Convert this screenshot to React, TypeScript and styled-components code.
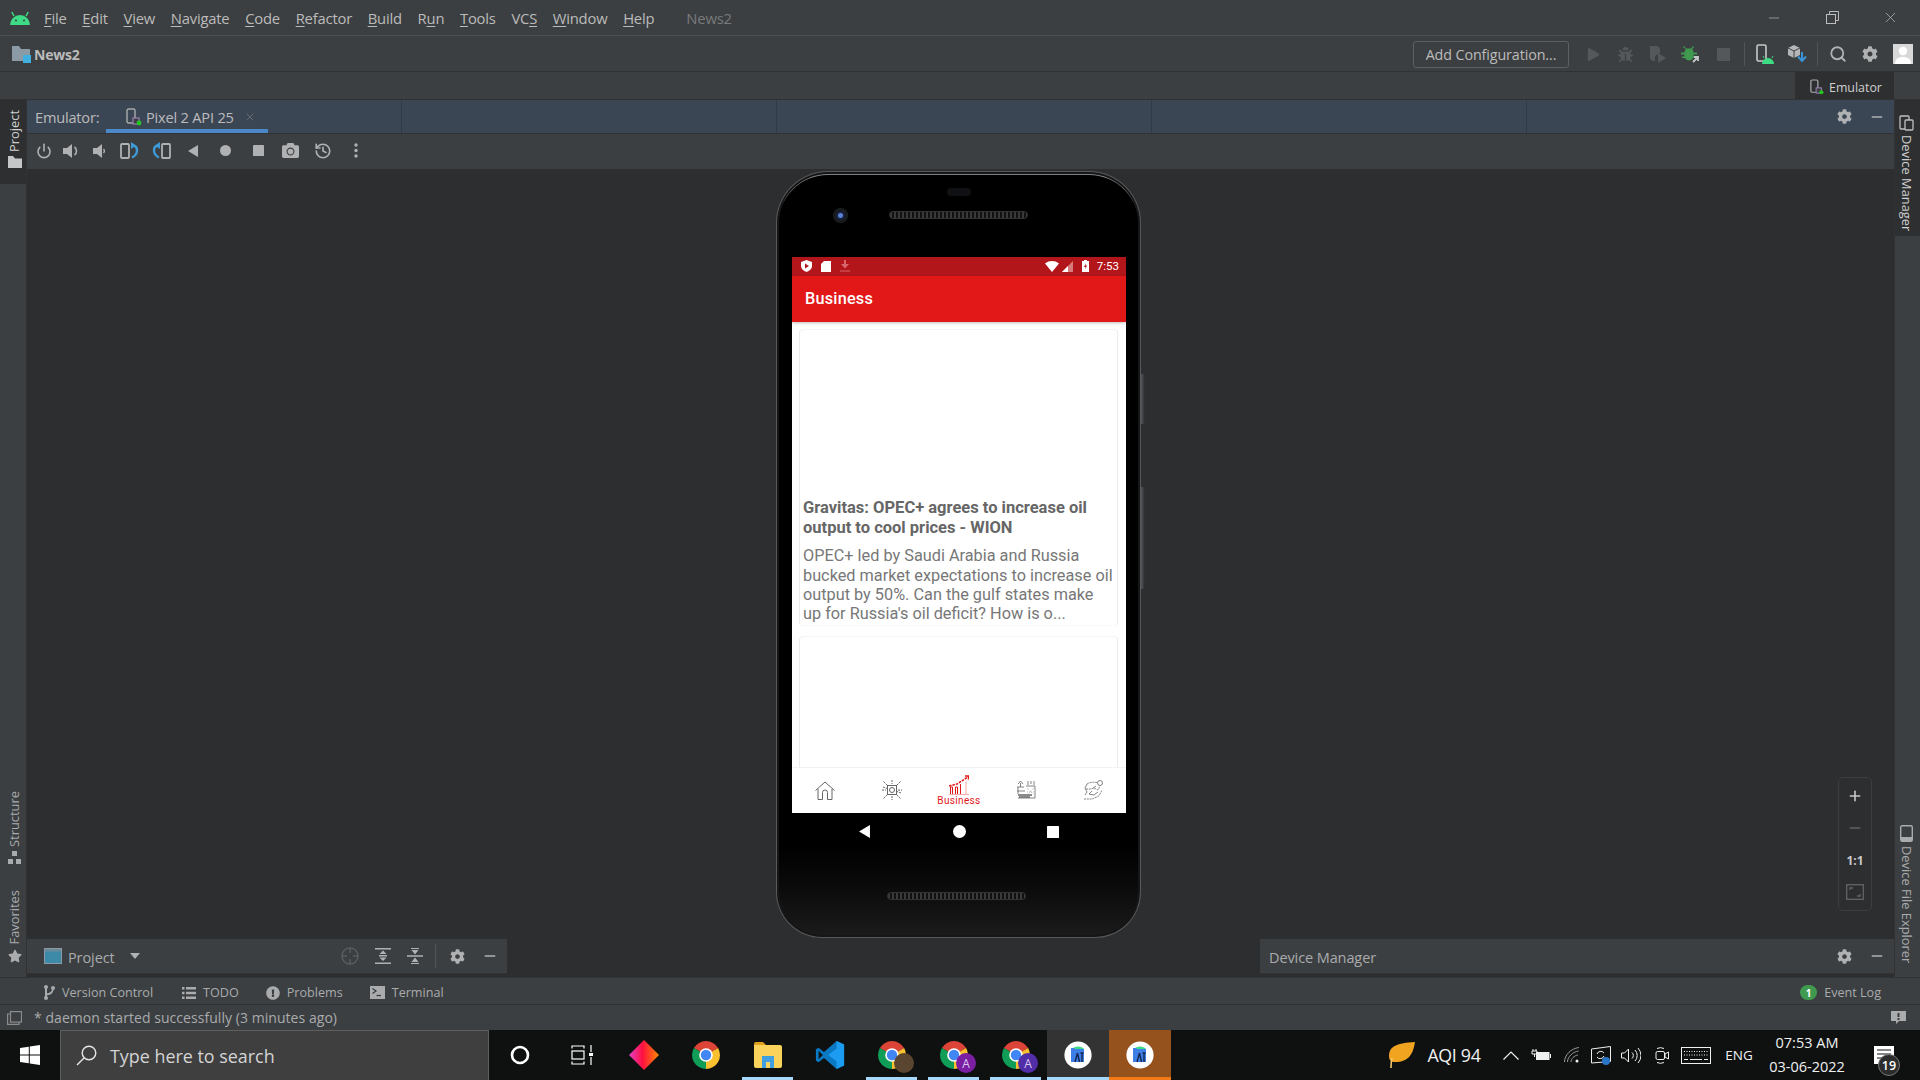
import React from 'react';
import styled, { createGlobalStyle } from 'styled-components';
import { FaBug, FaCamera, FaCog, FaPlay, FaStar, FaExclamationCircle } from 'react-icons/fa';
import { Search, Power, History, X, Minus, Plus } from 'lucide-react';

const UI_FONT = '"Open Sans", "Noto Sans", sans-serif';

const GlobalStyle = createGlobalStyle`
  html, body { margin: 0; padding: 0; background: #3c3f41; }
  * { box-sizing: border-box; }
  body { font-family: ${UI_FONT}; overflow: hidden; }
`;

const Page = styled.div`
  width: 1920px;
  height: 1080px;
  display: flex;
  flex-direction: column;
  background: #3c3f41;
  color: #bbbbbb;
  overflow: hidden;
`;

/* ---------- title + toolbar ---------- */

const TitleBar = styled.div`
  height: 36px;
  flex: none;
  display: flex;
  align-items: center;
  padding-left: 10px;
  border-bottom: 1px solid #4d5052;
`;

const MenuList = styled.div`
  display: flex;
  gap: 15.7px;
  margin-left: 14px;
  font-size: 14.8px;
  letter-spacing: -0.2px;
`;

const MenuItem = styled.span`
  color: #bbbbbb;
  u { text-underline-offset: 2px; }
`;

const ProjectTitle = styled.span`
  margin-left: 32px;
  font-size: 14.8px;
  letter-spacing: -0.2px;
  color: #787a7c;
`;

const WindowControls = styled.div`
  margin-left: auto;
  display: flex;
  color: #bdbdbd;
`;

const WindowButton = styled.div`
  width: 58.5px;
  height: 35px;
  display: flex;
  align-items: center;
  justify-content: center;
`;

const ToolBar = styled.div`
  height: 36px;
  flex: none;
  display: flex;
  align-items: center;
  padding: 1px 7px 0 12px;
  border-bottom: 1px solid #323232;
`;

const ProjectName = styled.span`
  margin-left: 3px;
  font-size: 14px;
  font-weight: 700;
  letter-spacing: -0.2px;
  color: #bbbbbb;
`;

const ToolGroup = styled.div`
  margin-left: auto;
  display: flex;
  align-items: center;
`;

const ConfigButton = styled.div`
  width: 156px;
  height: 27px;
  margin-right: 8px;
  display: flex;
  align-items: center;
  justify-content: center;
  border: 1px solid #5e6060;
  border-radius: 3px;
  font-size: 14.3px;
  letter-spacing: -0.1px;
  color: #bbbbbb;
`;

const ToolIcon = styled.div<{ $w?: number; $color?: string }>`
  width: ${(p) => p.$w ?? 32}px;
  height: 30px;
  flex: none;
  display: flex;
  align-items: center;
  justify-content: center;
  color: ${(p) => p.$color ?? '#afb1b3'};
`;

const ToolSep = styled.div<{ $ml?: number }>`
  width: 1px;
  height: 24px;
  margin-left: ${(p) => p.$ml ?? 0}px;
  background: #515355;
`;

const Avatar = styled.div`
  width: 20px;
  height: 20px;
  margin-left: 11px;
  background: #d8d8d8;
  display: flex;
  align-items: center;
  justify-content: center;
`;

const TabStrip = styled.div`
  height: 28px;
  flex: none;
  display: flex;
  justify-content: flex-end;
  padding-right: 26px;
  border-bottom: 1px solid #323232;
`;

const TabButton = styled.div`
  width: 99px;
  height: 27px;
  display: flex;
  align-items: center;
  padding: 3px 0 0 15px;
  gap: 5px;
  background: #2d2f31;
  font-size: 12.4px;
  color: #d0d0d0;
`;

/* ---------- body ---------- */

const Body = styled.div`
  flex: 1;
  min-height: 0;
  display: flex;
`;

const SideStrip = styled.div<{ $side: 'left' | 'right' }>`
  width: ${(p) => (p.$side === 'left' ? 27 : 26)}px;
  flex: none;
  display: flex;
  flex-direction: column;
  justify-content: space-between;
  ${(p) => (p.$side === 'left' ? 'border-right: 1px solid #323232;' : 'border-left: 1px solid #323232;')}
`;

const SideGroup = styled.div`
  display: flex;
  flex-direction: column;
  align-items: center;
`;

const SideTab = styled.div<{ $active?: boolean; $pad?: string }>`
  width: 100%;
  display: flex;
  flex-direction: column;
  align-items: center;
  gap: 4px;
  padding: ${(p) => p.$pad ?? '8px 0'};
  background: ${(p) => (p.$active ? '#2d2f31' : 'transparent')};
  color: ${(p) => (p.$active ? '#d0d0d0' : '#a9abad')};
`;

const SideLabel = styled.span<{ $side: 'left' | 'right' }>`
  writing-mode: vertical-rl;
  font-size: 12.9px;
  line-height: 15px;
  ${(p) => (p.$side === 'left' ? 'transform: rotate(180deg);' : '')}
`;

const Center = styled.div`
  flex: 1;
  min-width: 0;
  display: flex;
  flex-direction: column;
`;

const EmuHeader = styled.div`
  height: 34px;
  flex: none;
  display: flex;
  align-items: stretch;
  background: #3b4655;
  border-bottom: 1px solid #323232;
`;

const EmuLabel = styled.div`
  width: 79px;
  padding-left: 8px;
  display: flex;
  align-items: center;
  font-size: 14.6px;
  letter-spacing: -0.2px;
  color: #bbbbbb;
`;

const EmuTab = styled.div`
  width: 162px;
  display: flex;
  align-items: center;
  gap: 4px;
  padding: 4px 0 0 20px;
  font-size: 14.6px;
  letter-spacing: -0.2px;
  color: #bbbbbb;
  border-bottom: 4px solid #4a88c7;
`;

const HeaderCells = styled.div`
  flex: 1;
  display: flex;
`;

const HeaderCell = styled.div<{ $w?: number }>`
  width: ${(p) => p.$w ?? 375}px;
  flex: none;
  border-right: 1px solid #323a45;
`;

const HeaderTools = styled.div`
  margin-left: auto;
  display: flex;
  align-items: center;
`;

const EmuTools = styled.div`
  height: 35px;
  flex: none;
  display: flex;
  align-items: center;
  padding: 0 0 2px 4px;
  background: #3c3f41;
`;

const Canvas = styled.div`
  flex: 1;
  min-height: 0;
  position: relative;
  display: flex;
  align-items: center;
  justify-content: center;
  padding-right: 4px;
  background: #2c2e30;
`;

const ZoomPanel = styled.div`
  position: absolute;
  right: 22px;
  bottom: 28px;
  width: 34px;
  height: 134px;
  display: flex;
  flex-direction: column;
  justify-content: space-around;
  align-items: center;
  border: 1px solid #3c3f41;
  border-radius: 5px;
  padding: 2px 0;
  color: #c8c8c8;
`;

const ZoomItem = styled.div<{ $dim?: boolean }>`
  height: 30px;
  display: flex;
  align-items: center;
  justify-content: center;
  font-size: 12px;
  font-weight: 700;
  color: ${(p) => (p.$dim ? '#606264' : '#c8c8c8')};
`;

/* ---------- phone ---------- */

const Phone = styled.div`
  width: 365px;
  height: 767px;
  position: relative;
  display: flex;
  flex-direction: column;
  align-items: center;
  border-radius: 52px 52px 46px 46px;
  background: linear-gradient(#000 88%, #0a0a0a 93%, #1c1c1c);
  box-shadow: inset 0 0 0 1px #57595b, inset 0 0 0 3px #161616, inset 0 2px 0 2px #7d7f81;
`;

const SideKey = styled.div<{ $top: number; $h: number }>`
  position: absolute;
  right: -4px;
  top: ${(p) => p.$top}px;
  width: 4px;
  height: ${(p) => p.$h}px;
  background: linear-gradient(90deg, #55575a, #2a2b2d);
  border-radius: 0 2px 2px 0;
`;

const TopBezel = styled.div`
  height: 86px;
  width: 100%;
  flex: none;
  display: flex;
  flex-direction: column;
  align-items: center;
  padding-top: 17px;
  gap: 15px;
  position: relative;
`;

const Earpiece = styled.div`
  width: 24px;
  height: 8px;
  border-radius: 4px;
  background: #101114;
`;

const Speaker = styled.div`
  width: 139px;
  height: 8px;
  border-radius: 4px;
  border: 1px solid #333;
  background: repeating-linear-gradient(90deg, #3a3a3a 0 2px, #111 2px 4px);
`;

const CameraLens = styled.div`
  position: absolute;
  left: 57px;
  top: 37px;
  width: 15px;
  height: 15px;
  border-radius: 50%;
  background: radial-gradient(circle, #5a7fd8 0 2px, #18223c 3px, #16181c 6px, #23252a 8px);
`;

const Screen = styled.div`
  width: 334px;
  height: 556px;
  flex: none;
  display: flex;
  flex-direction: column;
  background: #fff;
  margin-left: 1px;
`;

const StatusBar = styled.div`
  height: 19px;
  flex: none;
  display: flex;
  align-items: center;
  gap: 9px;
  padding: 0 7px 0 9px;
  background: #b3161a;
  color: #fff;
  font-family: Roboto, sans-serif;
  font-size: 11.5px;
`;

const StatusRight = styled.div`
  margin-left: auto;
  display: flex;
  align-items: center;
  gap: 3px;
`;

const StatusGap = styled.span<{ $w: number }>`
  width: ${(p) => p.$w}px;
`;

const AppBar = styled.div`
  height: 46px;
  flex: none;
  display: flex;
  align-items: center;
  padding-left: 13px;
  background: #e21818;
  color: #fff;
  font-family: Roboto, sans-serif;
  font-size: 16.3px;
  font-weight: 500;
  letter-spacing: 0.2px;
  box-shadow: 0 1px 3px rgba(0, 0, 0, 0.25);
  position: relative;
`;

const NewsList = styled.div`
  flex: 1;
  min-height: 0;
  overflow: hidden;
  display: flex;
  flex-direction: column;
  gap: 10px;
  padding: 7px 8px 0 7px;
`;

const NewsCard = styled.div<{ $h: number }>`
  height: ${(p) => p.$h}px;
  flex: none;
  display: flex;
  flex-direction: column;
  justify-content: flex-end;
  padding: 0 1.5px 1px 3px;
  border: 1px solid #ececec;
  border-top-color: #f5f5f5;
  border-bottom-color: #f8f8f8;
  border-radius: 4px;
  font-family: Roboto, sans-serif;
`;

const NewsTitle = styled.div`
  font-size: 16.5px;
  font-weight: 700;
  line-height: 19.5px;
  color: #666666;
  margin-bottom: 9px;
`;

const NewsBody = styled.div`
  font-size: 16.3px;
  line-height: 19.3px;
  color: #777777;
`;

const BottomNav = styled.div`
  height: 46px;
  flex: none;
  display: flex;
  background: #fff;
  border-top: 1px solid #f2f2f2;
`;

const NavItem = styled.div<{ $active?: boolean }>`
  flex: 1;
  display: flex;
  flex-direction: column;
  align-items: center;
  justify-content: center;
  color: ${(p) => (p.$active ? '#e21818' : '#666')};
  font-family: Roboto, sans-serif;
  font-size: 10px;
  letter-spacing: 0.35px;
  line-height: 11px;
`;

const SoftKeys = styled.div`
  width: 334px;
  height: 38px;
  flex: none;
  margin-left: 1px;
  display: flex;
  align-items: center;
  justify-content: space-between;
  padding: 0 67px 0 66px;
`;

const BottomSpeaker = styled(Speaker)`
  margin-top: 41px;
  margin-right: 5px;
`;

/* ---------- bottom panels ---------- */

const PanelRow = styled.div`
  height: 38px;
  flex: none;
  display: flex;
  background: #2c2e30;
`;

const PanelPart = styled.div<{ $w: number }>`
  width: ${(p) => p.$w}px;
  flex: none;
  height: 35px;
  display: flex;
  align-items: center;
  background: #3c3f41;
  border-bottom: 1px solid #323232;
  font-size: 14.5px;
  color: #a9abad;
`;

const PanelSpacer = styled.span<{ $w: number }>`
  width: ${(p) => p.$w}px;
  flex: none;
`;

const PanelText = styled.span<{ $ml: number }>`
  margin-left: ${(p) => p.$ml}px;
  padding-top: 2px;
  letter-spacing: -0.1px;
`;

const PanelTools = styled.div`
  margin-left: auto;
  display: flex;
  align-items: center;
`;

const Gap = styled.div`
  flex: 1;
`;

const ToolStripe = styled.div`
  height: 28px;
  flex: none;
  display: flex;
  align-items: center;
  padding: 3px 39px 0 44px;
  border-top: 1px solid #323232;
  border-bottom: 1px solid #323232;
  font-size: 12.6px;
  color: #a9abad;
`;

const StripeItem = styled.div<{ $ml?: number; $end?: boolean }>`
  display: flex;
  align-items: center;
  gap: 7px;
  margin-left: ${(p) => (p.$end ? 'auto' : `${p.$ml ?? 0}px`)};
`;

const EventBadge = styled.div`
  width: 17px;
  height: 15px;
  border-radius: 8px;
  background: #3f9a50;
  color: #fff;
  font-size: 10px;
  font-weight: 700;
  display: flex;
  align-items: center;
  justify-content: center;
`;

const StatusLine = styled.div`
  height: 25px;
  flex: none;
  display: flex;
  align-items: center;
  padding: 0 14px 0 7px;
  font-size: 14px;
  letter-spacing: 0.05px;
  color: #a9abad;
  gap: 12px;
`;

const StatusEnd = styled.span`
  margin-left: auto;
  display: flex;
`;

/* ---------- taskbar ---------- */

const Taskbar = styled.div`
  height: 50px;
  flex: none;
  display: flex;
  align-items: stretch;
  background: #0f1010;
  color: #fff;
`;

const StartButton = styled.div`
  width: 60px;
  flex: none;
  display: flex;
  align-items: center;
  justify-content: center;
`;

const SearchBox = styled.div`
  width: 429px;
  flex: none;
  display: flex;
  align-items: center;
  gap: 13px;
  padding-left: 15px;
  background: #3f3f3f;
  border: 1px solid #5f5f5f;
  border-bottom: none;
  font-size: 17.9px;
  color: #d4d4d4;
`;

const TaskSlot = styled.div<{ $bg?: string; $bar?: string }>`
  width: 62px;
  flex: none;
  position: relative;
  display: flex;
  align-items: center;
  justify-content: center;
  background: ${(p) => p.$bg ?? 'transparent'};
  &::after {
    content: '';
    display: ${(p) => (p.$bar ? 'block' : 'none')};
    position: absolute;
    bottom: 0;
    left: ${(p) => (p.$bg ? 0 : 5)}px;
    right: ${(p) => (p.$bg ? 0 : 6)}px;
    height: 3px;
    background: ${(p) => p.$bar};
  }
`;

const AppBadge = styled.div<{ $color: string }>`
  position: absolute;
  left: 33px;
  top: 23px;
  width: 20px;
  height: 20px;
  border-radius: 50%;
  background: ${(p) => p.$color};
  color: #d9c8f0;
  font-size: 12px;
  display: flex;
  align-items: center;
  justify-content: center;
`;

const Tray = styled.div`
  margin-left: auto;
  display: flex;
  align-items: center;
  font-size: 13.5px;
  color: #f0f0f0;
`;

const TrayCell = styled.div<{ $w: number; $ml?: number }>`
  width: ${(p) => p.$w}px;
  margin-left: ${(p) => p.$ml ?? 0}px;
  flex: none;
  display: flex;
  align-items: center;
  justify-content: center;
  position: relative;
`;

const TrayEnd = styled.span`
  width: 20px;
  flex: none;
`;

const AqiText = styled.span`
  font-size: 17.8px;
  letter-spacing: -0.3px;
  white-space: nowrap;
`;

const Clock = styled.div`
  display: flex;
  flex-direction: column;
  align-items: center;
  font-size: 14.5px;
  line-height: 24px;
  color: #f0f0f0;
  white-space: nowrap;
`;

const CountBadge = styled.div`
  position: absolute;
  left: 10px;
  top: 8px;
  width: 22px;
  height: 22px;
  border-radius: 50%;
  background: #2c2c2c;
  border: 1px solid #777;
  color: #fff;
  font-size: 12.5px;
  font-weight: 600;
  display: flex;
  align-items: center;
  justify-content: center;
`;

/* ---------- icons ---------- */

const AndroidLogo = () => (
  <svg width="20" height="14" viewBox="0 0 20 14">
    <path d="M0 14a10 10 0 0 1 20 0z" fill="#3ddc84" />
    <path d="M4 5 1.800 1M16 5l2.200-4" stroke="#3ddc84" strokeWidth="1.500" />
    <circle cx="6" cy="9.500" r="1" fill="#3c3f41" />
    <circle cx="14" cy="9.500" r="1" fill="#3c3f41" />
  </svg>
);

const FolderMark = () => (
  <svg width="19" height="17" viewBox="0 0 19 17">
    <path d="M0 0h7l2 3h9v9H0z" fill="#8c9aa5" />
    <path d="M0 12h11v3H0z" fill="#8c9aa5" />
    <rect x="11" y="9" width="8" height="8" fill="#3fb0e0" />
  </svg>
);

const DevicePip = ({ size = 16 }: { size?: number }) => (
  <svg width={size} height={size + 2} viewBox="0 0 16 18">
    <rect x="1" y="1" width="8" height="14" rx="1.500" fill="none" stroke="#a9abad" strokeWidth="1.400" />
    <rect x="7" y="10" width="6" height="6" fill="#3c3f41" stroke="#9a7fb0" strokeWidth="1.200" />
    <circle cx="13" cy="15" r="2.400" fill="#22c522" />
  </svg>
);

const VolUp = () => (
  <svg width="18" height="16" viewBox="0 0 18 16">
    <path d="M1 5h4l5-4v14l-5-4H1z" fill="#afb1b3" />
    <path d="M12.500 4a5 5 0 0 1 0 8" fill="none" stroke="#afb1b3" strokeWidth="1.600" />
  </svg>
);

const VolDown = () => (
  <svg width="14" height="16" viewBox="0 0 14 16">
    <path d="M1 5h4l5-4v14l-5-4H1z" fill="#afb1b3" />
    <path d="M11.500 6a3 3 0 0 1 0 4" fill="none" stroke="#afb1b3" strokeWidth="1.400" />
  </svg>
);

const Rotate = ({ flip }: { flip?: boolean }) => (
  <svg width="19" height="18" viewBox="0 0 19 18" style={flip ? { transform: 'scaleX(-1)' } : undefined}>
    <rect x="1" y="2" width="8" height="14" rx="1" fill="none" stroke="#afb1b3" strokeWidth="1.800" />
    <path d="M13 3.500c5.500 1 5.500 9 -1 12" fill="none" stroke="#3d9ad6" strokeWidth="2.400" />
    <path d="M11 0v7l5-3.500z" fill="#3d9ad6" />
  </svg>
);

const BackArrow = ({ size = 12, color = '#afb1b3' }: { size?: number; color?: string }) => (
  <svg width={size} height={size} viewBox="0 0 12 12">
    <path d="M11 0v12L1 6z" fill={color} />
  </svg>
);

const Dot = ({ size = 11, color = '#afb1b3' }: { size?: number; color?: string }) => (
  <svg width={size} height={size} viewBox="0 0 12 12">
    <circle cx="6" cy="6" r="6" fill={color} />
  </svg>
);

const Square = ({ size = 11, color = '#afb1b3' }: { size?: number; color?: string }) => (
  <svg width={size} height={size} viewBox="0 0 12 12">
    <rect width="12" height="12" rx="0.500" fill={color} />
  </svg>
);

const MoreDots = () => (
  <svg width="4" height="15" viewBox="0 0 4 15">
    <circle cx="2" cy="2" r="1.700" fill="#afb1b3" />
    <circle cx="2" cy="7.500" r="1.700" fill="#afb1b3" />
    <circle cx="2" cy="13" r="1.700" fill="#afb1b3" />
  </svg>
);

const RestoreIcon = () => (
  <svg width="13" height="13" viewBox="0 0 13 13" fill="none" stroke="#bdbdbd">
    <rect x="0.500" y="3.500" width="9" height="9" />
    <path d="M3.500 3.500v-3h9v9h-3" />
  </svg>
);

const ProfileRun = () => (
  <svg width="20" height="18" viewBox="0 0 20 18">
    <path d="M2 1h7l3 2v5l-5 3v5H4l-2-3z" fill="#55585a" />
    <path d="M10 8v10l8-5z" fill="#55585a" />
  </svg>
);

const AttachDebug = () => (
  <svg width="20" height="18" viewBox="0 0 20 18">
    <path d="M3 1l2 2.500h5L12 1l1 1-2 2.500c1 .7 1.500 1.800 1.500 3H16v2h-3.500v2H15v1.500h-3c-.8 1.600-2.200 2.500-4 2.500s-3.200-.9-4-2.500H1v-1.500h2.500v-2H0v-2h3.500c0-1.200.5-2.300 1.500-3L2 2z" fill="#3f9a50" />
    <path d="M12 17l5-5m-4 0h4v4" stroke="#c8c8c8" strokeWidth="1.800" fill="none" />
  </svg>
);

const DeviceAndroid = () => (
  <svg width="18" height="20" viewBox="0 0 18 20">
    <rect x="1" y="1" width="9" height="16" rx="1.500" fill="none" stroke="#c8c8c8" strokeWidth="1.600" />
    <path d="M6 20a6 6 0 0 1 12 0z" fill="#3ddc84" />
    <path d="M8 14l-1-2M16 14l1-2" stroke="#3ddc84" strokeWidth="1" />
  </svg>
);

const SdkBox = () => (
  <svg width="20" height="20" viewBox="0 0 20 20">
    <path d="M1 4l6-3 6 3v7l-6 3-6-3z" fill="#b4b6b8" />
    <path d="M1 4l6 3 6-3M7 7v7" stroke="#3c3f41" fill="none" />
    <path d="M15 8v8m-4-3.500l4 4.500 4-4.500" stroke="#3a94d6" strokeWidth="2" fill="none" />
  </svg>
);

const AvatarFigure = () => (
  <svg width="20" height="20" viewBox="0 0 20 20">
    <circle cx="10" cy="7" r="4.200" fill="#fff" />
    <path d="M2 20c0-5 3-7 8-7s8 2 8 7z" fill="#fff" />
  </svg>
);

const MoveTarget = () => (
  <svg width="18" height="18" viewBox="0 0 18 18" fill="none" stroke="#5a5c5e" strokeWidth="1.500">
    <circle cx="9" cy="9" r="8" />
    <path d="M9 1v5M9 12v5M1 9h5M12 9h5" />
  </svg>
);

const ExpandAll = () => (
  <svg width="16" height="16" viewBox="0 0 16 16" fill="#afb1b3">
    <path d="M0 0h16v1.600H0zM0 14.400h16V16H0zM4 7h8v1.500H4zM8 2.500 11.500 6h-7zM8 13 4.500 9.500h7z" />
  </svg>
);

const CollapseAll = () => (
  <svg width="16" height="16" viewBox="0 0 16 16" fill="#afb1b3">
    <path d="M0 7.200h16v1.600H0zM8 6.500 4.500 2h7zM8 9.500 11.500 14h-7z" />
    <path d="M4 0h8v1H4zM4 15h8v1H4z" />
  </svg>
);

const ProjectPanelIcon = () => (
  <svg width="18" height="16" viewBox="0 0 18 16">
    <rect x="0.500" y="0.500" width="17" height="15" fill="#3d8aa8" stroke="#8c9aa5" />
    <rect x="1" y="1" width="16" height="2.500" fill="#6a8a9c" />
  </svg>
);

const Caret = () => (
  <svg width="10" height="6" viewBox="0 0 10 6">
    <path d="M0 0h10L5 6z" fill="#afb1b3" />
  </svg>
);

const FolderSmall = () => (
  <svg width="14" height="12" viewBox="0 0 14 12">
    <path d="M0 0h5l2 2.500h7V12H0z" fill="#c4c6c8" />
  </svg>
);

const StructureIcon = () => (
  <svg width="13" height="13" viewBox="0 0 13 13" fill="#a9abad">
    <rect x="4" y="0" width="5" height="5" />
    <rect x="0" y="8" width="5" height="5" />
    <rect x="8" y="8" width="5" height="5" />
  </svg>
);

const DeviceManagerIcon = () => (
  <svg width="15" height="16" viewBox="0 0 15 16" fill="none" stroke="#c0c0c0" strokeWidth="1.300">
    <rect x="1" y="1" width="9" height="13" rx="1" />
    <rect x="6" y="5" width="8" height="10" rx="1" fill="#2d2f31" />
  </svg>
);

const PhoneSmall = () => (
  <svg width="13" height="17" viewBox="0 0 13 17">
    <rect x="0.700" y="0.700" width="11.600" height="15.600" rx="1.500" fill="none" stroke="#a9abad" strokeWidth="1.400" />
    <rect x="1" y="12" width="11" height="4" fill="#a9abad" />
  </svg>
);

const FitIcon = () => (
  <svg width="18" height="16" viewBox="0 0 18 16" fill="none" stroke="#626466" strokeWidth="1.300">
    <rect x="0.700" y="0.700" width="16.600" height="14.600" />
    <path d="M4 6V4h3M14 10v2h-3" />
  </svg>
);

const BranchIcon = () => (
  <svg width="11" height="15" viewBox="0 0 11 15" fill="#a9abad">
    <circle cx="2" cy="2" r="2" />
    <circle cx="2" cy="13" r="2" />
    <circle cx="9" cy="3" r="2" />
    <path d="M1 2h2v11H1zM2.500 8.500C6 8 8 7 8.200 3l1.500.2C9.500 8 7 10 3 10.200z" />
  </svg>
);

const TodoIcon = () => (
  <svg width="14" height="12" viewBox="0 0 14 12" fill="#a9abad">
    <path d="M0 0h2.500v2.500H0zM4 0h10v2.500H4zM0 4.700h2.500v2.500H0zM4 4.700h10v2.500H4zM0 9.400h2.500V12H0zM4 9.400h10V12H4z" />
  </svg>
);

const TerminalIcon = () => (
  <svg width="15" height="13" viewBox="0 0 15 13">
    <rect width="15" height="13" fill="#a9abad" />
    <path d="M2.500 2.500 6 5 2.500 7.500" stroke="#3c3f41" strokeWidth="1.300" fill="none" />
    <path d="M6.500 9.500H11" stroke="#3c3f41" strokeWidth="1.300" />
  </svg>
);

const CopyIcon = () => (
  <svg width="15" height="14" viewBox="0 0 15 14" fill="none" stroke="#8a8c8e" strokeWidth="1.200">
    <rect x="3.500" y="0.600" width="11" height="10.500" />
    <path d="M3.500 3H.6v10.400h11.400V11" />
  </svg>
);

const MessageAlert = () => (
  <svg width="15" height="13" viewBox="0 0 15 13">
    <path d="M0 0h15v10H8l-3 3v-3H0z" fill="#a9abad" />
    <path d="M6.500 2h2v4h-2zM6.500 7h2v2h-2z" fill="#3c3f41" />
  </svg>
);

const StatusIcons = {
  shield: (
    <svg width="11" height="12" viewBox="0 0 11 12">
      <path d="M5.500 0 11 2v4c0 3-2.500 5-5.500 6C2.500 11 0 9 0 6V2z" fill="#fff" />
      <path d="M4 3.500v5l4-2.500z" fill="#b3161a" />
    </svg>
  ),
  sd: (
    <svg width="10" height="11" viewBox="0 0 10 11">
      <path d="M3 0h7v11H0V3z" fill="#fff" />
    </svg>
  ),
  download: (
    <svg width="10" height="12" viewBox="0 0 10 12" fill="#d8666a">
      <path d="M4 0h2v4h3L5 8.500 1 4h3zM0 10.500h10v1H0z" />
    </svg>
  ),
  wifi: (
    <svg width="14" height="11" viewBox="0 0 14 11">
      <path d="M0 2.500C4-.8 10-.8 14 2.500L7 11z" fill="#fff" />
    </svg>
  ),
  signal: (
    <svg width="11" height="11" viewBox="0 0 11 11">
      <path d="M11 0v11H0z" fill="#d77b7d" />
      <path d="M6 5v6H0z" fill="#fff" />
    </svg>
  ),
  battery: (
    <svg width="7" height="12" viewBox="0 0 7 12">
      <path d="M2 0h3v1h2v11H0V1h2z" fill="#fff" />
      <path d="M4 3 2 7h1.500L3 9.500 5 5.500H3.500z" fill="#b3161a" />
    </svg>
  ),
};

const HomeGlyph = () => (
  <svg width="20" height="19" viewBox="0 0 20 19" fill="none" stroke="#666" strokeWidth="1">
    <path d="M.5 9.500 10 1l9.500 8.500M3 8v10.500h4.500V11.500a2.500 2.500 0 0 1 5 0v7H17V8" />
  </svg>
);

const ChipGlyph = () => (
  <svg width="20" height="20" viewBox="0 0 20 20" fill="none" stroke="#555" strokeWidth="0.900">
    <rect x="5.500" y="5.500" width="9" height="9" />
    <circle cx="10" cy="10" r="2.500" />
    <path d="M5 5 1.500 1.500M15 5l3.500-3.500M5 15l-3.500 3.500M15 15l3.500 3.500M0 10h4M16 10h4M10 0v4M10 16v4M1 7l4 1.500M19 13l-4-1.500" strokeDasharray="2 1" />
  </svg>
);

const BusinessGlyph = () => (
  <svg width="20" height="20" viewBox="0 0 20 20" fill="none" stroke="#e21818" strokeWidth="1">
    <path d="M0 11 8 9l11-7" strokeWidth="1.600" strokeDasharray="2.500 1" />
    <path d="M16 1h3.500v3.500" strokeWidth="1.400" />
    <path d="M1.500 19V12h2v7M6.500 19V12h2v7M11.500 19V9" />
    <path d="M17 19V7h1" stroke="#f5a8a8" />
    <path d="M0 19.500h20" stroke="#f5a8a8" />
  </svg>
);

const SportsGlyph = () => (
  <svg width="20" height="20" viewBox="0 0 20 20" fill="none" stroke="#666" strokeWidth="0.800">
    <path d="M1 7h7M4.500 7V3M2 4l2.500-3L7 4M1 11h8M2 7v7M2 18h17M10 6h9v12" />
    <path d="M12 1v4M15 1v3M18 1v4" />
    <path d="M11 8l7 7M18 8l-7 7M11 12h7" stroke="#aaa" strokeDasharray="1 1" />
    <path d="M2 15h14M3 17h11" strokeWidth="1.400" />
  </svg>
);

const HealthGlyph = () => (
  <svg width="20" height="20" viewBox="0 0 20 20" fill="none" stroke="#666" strokeWidth="0.800">
    <path d="M4 4c3-2 7-2 10-1.500M3 9h5l3-1 4 2 2-4M1 19h8l7-3 3-6" strokeDasharray="2 0.800" />
    <circle cx="17" cy="3" r="2.500" />
    <path d="M4 4 2 8l2 4-2 3M9 11l-3 3 5 1 4-3M13 6l-3 2" />
  </svg>
);

const ChromeLogo = ({ size = 28 }: { size?: number }) => (
  <svg width={size} height={size} viewBox="0 0 28 28">
    <path d="M14 14 26.120 7A14 14 0 0 0 1.880 7z" fill="#db4437" />
    <path d="M14 14 14 28A14 14 0 0 0 26.120 7z" fill="#fbc02d" />
    <path d="M14 14 1.880 7A14 14 0 0 0 14 28z" fill="#0f9d58" />
    <circle cx="14" cy="14" r="6.800" fill="#fff" />
    <circle cx="14" cy="14" r="5.200" fill="#4285f4" />
  </svg>
);

const StudioLogo = () => (
  <svg width="28" height="28" viewBox="0 0 28 28">
    <circle cx="14" cy="14" r="13.600" fill="#fff" />
    <path d="M8 8c2-3.500 10-3.500 12 0z" fill="#3ddc84" />
    <path d="M7 7h3l1 1h9v13H7z" fill="#3d7fe6" />
    <path d="M11 21l2.500-9M15.500 21 13.500 12M18 12v9M16.500 12h3" stroke="#14264f" strokeWidth="1.400" fill="none" />
  </svg>
);

const DiamondLogo = () => (
  <svg width="30" height="30" viewBox="0 0 30 30">
    <defs>
      <linearGradient id="diamondFill" x1="0" x2="1" y1="0" y2="0">
        <stop offset="0" stopColor="#e040c8" />
        <stop offset="0.45" stopColor="#ff1040" />
        <stop offset="1" stopColor="#ff8a00" />
      </linearGradient>
    </defs>
    <path d="M15 0 30 15 15 30 0 15z" fill="url(#diamondFill)" />
  </svg>
);

const FilesLogo = () => (
  <svg width="28" height="26" viewBox="0 0 28 26">
    <path d="M0 2a2 2 0 0 1 2-2h7l3 3h-12z" fill="#e0a21c" />
    <path d="M0 3h26a2 2 0 0 1 2 2v19a2 2 0 0 1-2 2H2a2 2 0 0 1-2-2z" fill="#fbd35c" />
    <path d="M8 14h12v12h-4v-6h-4v6H8z" fill="#3f9fe0" />
  </svg>
);

const VsCodeLogo = () => (
  <svg width="30" height="30" viewBox="0 0 100 100">
    <path d="M72 3 97 15v70L72 97 30 60 12 74 3 69V31l9-5 18 14z" fill="#0a78c2" />
    <path d="M72 3 97 15v70L72 97V72L44 50l28-22z" fill="#1c9cf0" />
    <path d="M12 36 26 50 12 64z" fill="#0f1010" />
  </svg>
);

const WindowsLogo = () => (
  <svg width="20" height="20" viewBox="0 0 20 20" fill="#fff">
    <path d="M0 3 8.800 1.700v7.800H0zM9.800 1.500 20 0v9.500H9.800zM0 10.500h8.800v7.800L0 17zM9.800 10.500H20V20L9.800 18.500z" />
  </svg>
);

const SearchRing = () => (
  <svg width="21" height="21" viewBox="0 0 21 21" fill="none" stroke="#e6e6e6" strokeWidth="1.400">
    <circle cx="13" cy="8" r="6.800" />
    <path d="M8 13 1 20" />
  </svg>
);

const CortanaRing = () => (
  <svg width="20" height="20" viewBox="0 0 20 20" fill="none" stroke="#fff" strokeWidth="2.600">
    <circle cx="10" cy="10" r="8" />
  </svg>
);

const TaskViewIcon = () => (
  <svg width="22" height="20" viewBox="0 0 22 20" fill="none" stroke="#fff" strokeWidth="1.200">
    <path d="M1 3.500V1h12v2.500M1 16.500V19h12v-2.500" />
    <rect x="1" y="6" width="12" height="8" />
    <path d="M20 0v7M20 12v8" />
    <rect x="18" y="8" width="4" height="3" fill="#fff" stroke="none" />
  </svg>
);

const Leaf = () => (
  <svg width="26" height="26" viewBox="0 0 26 26">
    <path d="M26 0C24 12 20 20 6 20c-4 0-6-2-6-6C0 4 8 1 26 0z" fill="#f0a420" />
    <path d="M2 26c0-6 .5-8 1-10" stroke="#f7c66b" strokeWidth="1.600" fill="none" />
  </svg>
);

const ChevronUp = () => (
  <svg width="16" height="9" viewBox="0 0 16 9" fill="none" stroke="#f0f0f0" strokeWidth="1.200">
    <path d="M.5 8.500 8 1l7.500 7.500" />
  </svg>
);

const PlugBattery = () => (
  <svg width="20" height="13" viewBox="0 0 20 13">
    <path d="M2 0v2M5 0v2M1 2h5v3H1zM3.500 5v3" stroke="#f0f0f0" fill="none" />
    <rect x="5" y="3" width="13.500" height="8" fill="#f0f0f0" />
    <rect x="19" y="5" width="1" height="4" fill="#f0f0f0" />
  </svg>
);

const WifiArc = () => (
  <svg width="16" height="16" viewBox="0 0 16 16" fill="none" stroke="#9a9a9a" strokeWidth="1">
    <path d="M.5 15C.5 8 7 1.500 15 .5M3.500 15c0-5 5-10 11-11M7 15c0-3 3-6.500 7-7" />
    <circle cx="13" cy="14" r="1.500" fill="#f0f0f0" stroke="none" />
  </svg>
);

const MonitorSync = () => (
  <svg width="20" height="19" viewBox="0 0 20 19">
    <path d="M.5 3 19.500.5v15L.5 17z" fill="#0f1010" stroke="#f0f0f0" />
    <path d="M6 8a4 4 0 0 1 7-1M13 10a4 4 0 0 1-7 1" stroke="#f0f0f0" fill="none" />
    <circle cx="15" cy="15" r="4" fill="#2a76c6" />
  </svg>
);

const SpeakerIcon = () => (
  <svg width="20" height="17" viewBox="0 0 20 17" fill="none" stroke="#f0f0f0">
    <path d="M.5 6h3l4-4v13l-4-4h-3zM11 5.500a4 4 0 0 1 0 6M14 3a8 8 0 0 1 0 11M17 1a11 11 0 0 1 0 15" />
  </svg>
);

const MeetIcon = () => (
  <svg width="14" height="19" viewBox="0 0 14 19" fill="none" stroke="#f0f0f0">
    <path d="M2 2.500a8 8 0 0 1 7 0M2 16.500a8 8 0 0 0 7 0" />
    <rect x="1" y="5.500" width="8.500" height="8" rx="1.500" />
    <path d="M10 8l3.500-2v7L10 11z" />
  </svg>
);

const KeyboardIcon = () => (
  <svg width="30" height="17" viewBox="0 0 30 17" fill="none" stroke="#f0f0f0">
    <rect x="0.500" y="0.500" width="29" height="16" />
    <path d="M3 4.500h24M3 8h24" strokeDasharray="1 1.500" />
    <path d="M3 12.500h4M9 12.500h12M23 12.500h4" />
  </svg>
);

const NotifyBubble = () => (
  <svg width="20" height="18" viewBox="0 0 20 18">
    <path d="M0 0h20v18H0z" fill="#fff" />
    <path d="M3 4h14M3 8h14M3 12h8" stroke="#0f1010" />
  </svg>
);

/* ---------- data ---------- */

const MENUS: [string, string, string][] = [
  ['', 'F', 'ile'],
  ['', 'E', 'dit'],
  ['', 'V', 'iew'],
  ['', 'N', 'avigate'],
  ['', 'C', 'ode'],
  ['', 'R', 'efactor'],
  ['', 'B', 'uild'],
  ['R', 'u', 'n'],
  ['', 'T', 'ools'],
  ['VC', 'S', ''],
  ['', 'W', 'indow'],
  ['', 'H', 'elp'],
];

const App = () => {
  return (
    <Page>
      <GlobalStyle />
      <TitleBar>
        <AndroidLogo />
        <MenuList>
          {MENUS.map(([before, key, after]) => (
            <MenuItem key={before + key + after}>
              {before}
              <u>{key}</u>
              {after}
            </MenuItem>
          ))}
        </MenuList>
        <ProjectTitle>News2</ProjectTitle>
        <WindowControls>
          <WindowButton>
            <Minus size={16} strokeWidth={1} />
          </WindowButton>
          <WindowButton>
            <RestoreIcon />
          </WindowButton>
          <WindowButton>
            <X size={17} strokeWidth={1} />
          </WindowButton>
        </WindowControls>
      </TitleBar>

      <ToolBar>
        <FolderMark />
        <ProjectName>News2</ProjectName>
        <ToolGroup>
          <ConfigButton>Add Configuration...</ConfigButton>
          <ToolIcon $color="#55585a">
            <FaPlay size={13} />
          </ToolIcon>
          <ToolIcon $color="#55585a">
            <FaBug size={15} />
          </ToolIcon>
          <ToolIcon $w={34}>
            <ProfileRun />
          </ToolIcon>
          <ToolIcon>
            <AttachDebug />
          </ToolIcon>
          <ToolIcon $color="#55585a">
            <Square size={13} color="#55585a" />
          </ToolIcon>
          <ToolSep $ml={5} />
          <ToolIcon $w={40}>
            <DeviceAndroid />
          </ToolIcon>
          <ToolIcon $w={24}>
            <SdkBox />
          </ToolIcon>
          <ToolIcon $w={8} />
          <ToolSep />
          <ToolIcon $w={40}>
            <Search size={18} strokeWidth={2.4} />
          </ToolIcon>
          <ToolIcon $w={24}>
            <FaCog size={16} />
          </ToolIcon>
          <Avatar>
            <AvatarFigure />
          </Avatar>
        </ToolGroup>
      </ToolBar>

      <TabStrip>
        <TabButton>
          <DevicePip size={14} />
          Emulator
        </TabButton>
      </TabStrip>

      <Body>
        <SideStrip $side="left">
          <SideGroup>
            <SideTab $active $pad="10px 0 16px 3px">
              <SideLabel $side="left">Project</SideLabel>
              <FolderSmall />
            </SideTab>
          </SideGroup>
          <SideGroup>
            <SideTab $pad="8px 0 26px 3px">
              <SideLabel $side="left">Structure</SideLabel>
              <StructureIcon />
            </SideTab>
            <SideTab $pad="0 0 14px 3px">
              <SideLabel $side="left">Favorites</SideLabel>
              <FaStar size={14} />
            </SideTab>
          </SideGroup>
        </SideStrip>

        <Center>
          <EmuHeader>
            <EmuLabel>Emulator:</EmuLabel>
            <EmuTab>
              <DevicePip />
              Pixel 2 API 25
              <X size={12} color="#656a72" style={{ marginLeft: 6 }} />
            </EmuTab>
            <HeaderCells>
              <HeaderCell $w={134} />
              <HeaderCell />
              <HeaderCell />
              <HeaderCell />
            </HeaderCells>
            <HeaderTools>
              <ToolIcon>
                <FaCog size={15} />
              </ToolIcon>
              <ToolIcon $w={34}>
                <Minus size={16} strokeWidth={2.4} />
              </ToolIcon>
            </HeaderTools>
          </EmuHeader>

          <EmuTools>
            <ToolIcon $w={26}>
              <Power size={16} strokeWidth={2.4} />
            </ToolIcon>
            <ToolIcon $w={28}>
              <VolUp />
            </ToolIcon>
            <ToolIcon $w={28}>
              <VolDown />
            </ToolIcon>
            <ToolIcon>
              <Rotate />
            </ToolIcon>
            <ToolIcon>
              <Rotate flip />
            </ToolIcon>
            <ToolIcon $w={32.5}>
              <BackArrow />
            </ToolIcon>
            <ToolIcon $w={32.5}>
              <Dot />
            </ToolIcon>
            <ToolIcon $w={32.5}>
              <Square />
            </ToolIcon>
            <ToolIcon $w={32.5}>
              <FaCamera size={17} />
            </ToolIcon>
            <ToolIcon $w={32.5}>
              <History size={18} strokeWidth={2.2} />
            </ToolIcon>
            <ToolIcon $w={32.5}>
              <MoreDots />
            </ToolIcon>
          </EmuTools>

          <Canvas>
            <Phone>
              <SideKey $top={203} $h={50} />
              <SideKey $top={316} $h={102} />
              <TopBezel>
                <Earpiece />
                <Speaker />
                <CameraLens />
              </TopBezel>
              <Screen>
                <StatusBar>
                  {StatusIcons.shield}
                  {StatusIcons.sd}
                  {StatusIcons.download}
                  <StatusRight>
                    {StatusIcons.wifi}
                    {StatusIcons.signal}
                    <StatusGap $w={3} />
                    {StatusIcons.battery}
                    <StatusGap $w={2} />
                    7:53
                  </StatusRight>
                </StatusBar>
                <AppBar>Business</AppBar>
                <NewsList>
                  <NewsCard $h={297}>
                    <NewsTitle>Gravitas: OPEC+ agrees to increase oil output to cool prices - WION</NewsTitle>
                    <NewsBody>
                      OPEC+ led by Saudi Arabia and Russia bucked market expectations to increase oil output by 50%. Can
                      the gulf states make up for Russia's oil deficit? How is o...
                    </NewsBody>
                  </NewsCard>
                  <NewsCard $h={200} />
                </NewsList>
                <BottomNav>
                  <NavItem>
                    <HomeGlyph />
                  </NavItem>
                  <NavItem>
                    <ChipGlyph />
                  </NavItem>
                  <NavItem $active>
                    <BusinessGlyph />
                    Business
                  </NavItem>
                  <NavItem>
                    <SportsGlyph />
                  </NavItem>
                  <NavItem>
                    <HealthGlyph />
                  </NavItem>
                </BottomNav>
              </Screen>
              <SoftKeys>
                <BackArrow size={13} color="#fff" />
                <Dot size={13} color="#fff" />
                <Square size={12} color="#fff" />
              </SoftKeys>
              <BottomSpeaker />
            </Phone>
            <ZoomPanel>
              <ZoomItem>
                <Plus size={16} strokeWidth={2.4} />
              </ZoomItem>
              <ZoomItem $dim>
                <Minus size={16} strokeWidth={2.4} />
              </ZoomItem>
              <ZoomItem>1:1</ZoomItem>
              <ZoomItem>
                <FitIcon />
              </ZoomItem>
            </ZoomPanel>
          </Canvas>

          <PanelRow>
            <PanelPart $w={480}>
              <PanelSpacer $w={17} />
              <ProjectPanelIcon />
              <PanelText $ml={6}>Project</PanelText>
              <PanelSpacer $w={15} />
              <Caret />
              <PanelTools>
                <ToolIcon $w={33}>
                  <MoveTarget />
                </ToolIcon>
                <ToolIcon $w={33}>
                  <ExpandAll />
                </ToolIcon>
                <ToolIcon $w={32}>
                  <CollapseAll />
                </ToolIcon>
                <ToolSep $ml={4} />
                <ToolIcon $w={42}>
                  <FaCog size={15} />
                </ToolIcon>
                <ToolIcon $w={24}>
                  <Minus size={16} strokeWidth={2.4} />
                </ToolIcon>
                <PanelSpacer $w={5} />
              </PanelTools>
            </PanelPart>
            <Gap />
            <PanelPart $w={634}>
              <PanelText $ml={9}>Device Manager</PanelText>
              <PanelTools>
                <ToolIcon>
                  <FaCog size={15} />
                </ToolIcon>
                <ToolIcon $w={34}>
                  <Minus size={16} strokeWidth={2.4} />
                </ToolIcon>
              </PanelTools>
            </PanelPart>
          </PanelRow>
        </Center>

        <SideStrip $side="right">
          <SideGroup>
            <SideTab $active $pad="15px 2px 5px 0">
              <DeviceManagerIcon />
              <SideLabel $side="right">Device Manager</SideLabel>
            </SideTab>
          </SideGroup>
          <SideGroup>
            <SideTab $pad="0 2px 14px 0">
              <PhoneSmall />
              <SideLabel $side="right">Device File Explorer</SideLabel>
            </SideTab>
          </SideGroup>
        </SideStrip>
      </Body>

      <ToolStripe>
        <StripeItem>
          <BranchIcon />
          Version Control
        </StripeItem>
        <StripeItem $ml={29}>
          <TodoIcon />
          TODO
        </StripeItem>
        <StripeItem $ml={27}>
          <FaExclamationCircle size={14} />
          Problems
        </StripeItem>
        <StripeItem $ml={27}>
          <TerminalIcon />
          Terminal
        </StripeItem>
        <StripeItem $end>
          <EventBadge>1</EventBadge>
          Event Log
        </StripeItem>
      </ToolStripe>

      <StatusLine>
        <CopyIcon />
        <span>* daemon started successfully (3 minutes ago)</span>
        <StatusEnd>
          <MessageAlert />
        </StatusEnd>
      </StatusLine>

      <Taskbar>
        <StartButton>
          <WindowsLogo />
        </StartButton>
        <SearchBox>
          <SearchRing />
          Type here to search
        </SearchBox>
        <TaskSlot>
          <CortanaRing />
        </TaskSlot>
        <TaskSlot>
          <TaskViewIcon />
        </TaskSlot>
        <TaskSlot>
          <DiamondLogo />
        </TaskSlot>
        <TaskSlot>
          <ChromeLogo />
        </TaskSlot>
        <TaskSlot $bar="#a6d8fb">
          <FilesLogo />
        </TaskSlot>
        <TaskSlot>
          <VsCodeLogo />
        </TaskSlot>
        <TaskSlot $bar="#a6d8fb">
          <ChromeLogo />
          <AppBadge $color="#5a4630" />
        </TaskSlot>
        <TaskSlot $bar="#a6d8fb">
          <ChromeLogo />
          <AppBadge $color="#7b1fa2">A</AppBadge>
        </TaskSlot>
        <TaskSlot $bar="#a6d8fb">
          <ChromeLogo />
          <AppBadge $color="#512da8">A</AppBadge>
        </TaskSlot>
        <TaskSlot $bg="#333333" $bar="#a6d8fb">
          <StudioLogo />
        </TaskSlot>
        <TaskSlot $bg="#96521c" $bar="#f27a18">
          <StudioLogo />
        </TaskSlot>
        <Tray>
          <TrayCell $w={26}>
            <Leaf />
          </TrayCell>
          <TrayCell $w={54} $ml={12}>
            <AqiText>AQI 94</AqiText>
          </TrayCell>
          <TrayCell $w={16} $ml={22}>
            <ChevronUp />
          </TrayCell>
          <TrayCell $w={20} $ml={12}>
            <PlugBattery />
          </TrayCell>
          <TrayCell $w={16} $ml={13}>
            <WifiArc />
          </TrayCell>
          <TrayCell $w={20} $ml={11}>
            <MonitorSync />
          </TrayCell>
          <TrayCell $w={20} $ml={10}>
            <SpeakerIcon />
          </TrayCell>
          <TrayCell $w={14} $ml={14}>
            <MeetIcon />
          </TrayCell>
          <TrayCell $w={30} $ml={12}>
            <KeyboardIcon />
          </TrayCell>
          <TrayCell $w={30} $ml={13}>
            ENG
          </TrayCell>
          <TrayCell $w={78} $ml={14}>
            <Clock>
              <span>07:53 AM</span>
              <span>03-06-2022</span>
            </Clock>
          </TrayCell>
          <TrayCell $w={32} $ml={22}>
            <NotifyBubble />
            <CountBadge>19</CountBadge>
          </TrayCell>
          <TrayEnd />
        </Tray>
      </Taskbar>
    </Page>
  );
};

export default App;
